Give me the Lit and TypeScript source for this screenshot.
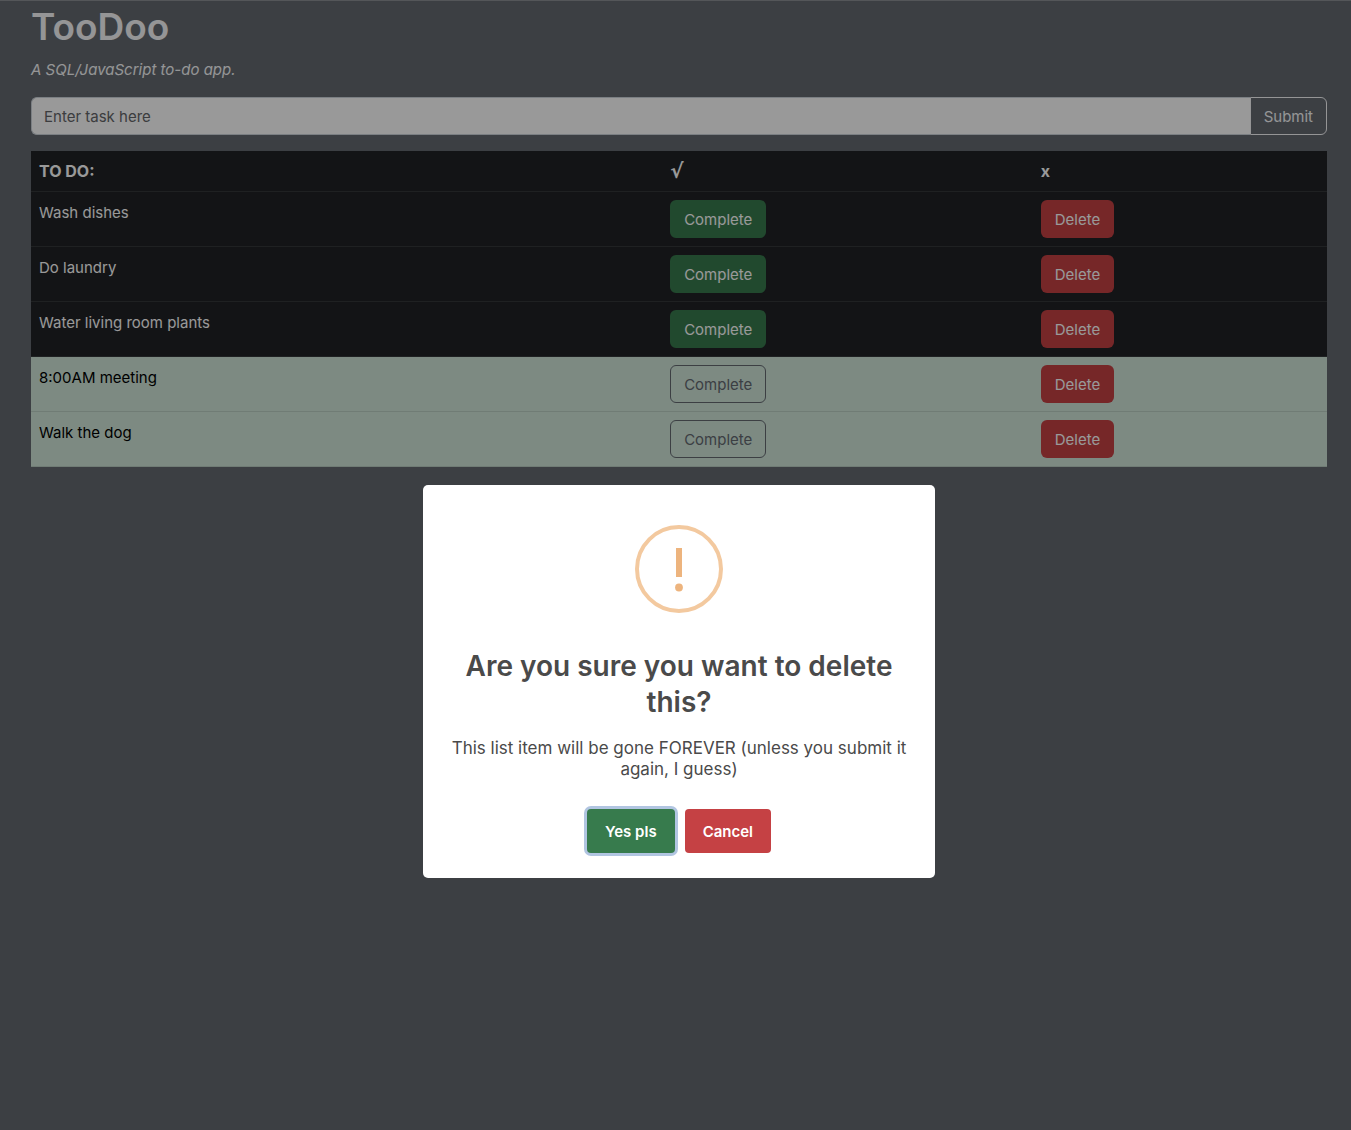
import { LitElement, html, css } from "lit";
import { customElement, state } from "lit/decorators.js";
import { classMap } from "lit/directives/class-map.js";

interface Task {
  name: string;
  done: boolean;
}

@customElement("app-root")
export class AppRoot extends LitElement {
  static styles = css`
    :host {
      display: block;
      min-height: 100vh;
      box-sizing: border-box;
      padding: 0 24px 24px 31px;
      border-top: 1px solid #8c9094;
      background: #646971;
      color: #f8f9fa;
      font: 400 15px/26px Inter, "Liberation Sans", sans-serif;
    }
    * {
      box-sizing: border-box;
    }
    h1 {
      margin: 0 0 4px;
      font-size: 37px;
      line-height: 52px;
      font-weight: 600;
    }
    .lead {
      margin: 0 0 14px;
      font-style: italic;
    }
    .entry {
      display: flex;
      margin-bottom: 16px;
    }
    .entry input {
      flex: 1;
      min-width: 0;
      height: 38px;
      padding: 6px 12px;
      border: 1px solid #ced4da;
      border-right: 0;
      border-radius: 6px 0 0 6px;
      background: #fff;
      color: #212529;
      font: inherit;
    }
    .entry input::placeholder {
      color: #646669;
      opacity: 1;
    }
    .btn {
      height: 38px;
      padding: 6px 13px 4px;
      border: 1px solid transparent;
      border-radius: 6px;
      color: #fff;
      font: inherit;
      white-space: nowrap;
      display: block;
    }
    .submit {
      border-color: #f8f9fa;
      border-radius: 0 6px 6px 0;
      background: none;
      color: #f8f9fa;
    }
    .success {
      background: #377b4d;
    }
    .danger {
      background: #c54144;
    }
    .outline {
      border-color: #646971;
      background: none;
      color: #646971;
    }
    table {
      width: 100%;
      border-collapse: separate;
      border-spacing: 0;
      table-layout: fixed;
    }
    .name {
      width: 48.7%;
    }
    .mark {
      width: 28.6%;
    }
    th,
    td {
      padding: 8px;
      border-bottom: 1px solid #34373a;
      background: #202225;
      color: #fff;
      text-align: left;
      vertical-align: top;
    }
    th {
      font-size: 16px;
      line-height: 24px;
      font-weight: 700;
    }
    .root {
      display: block;
      font: 700 20px/24px "DejaVu Sans", sans-serif;
    }
    .done td {
      border-bottom-color: #bbcfc3;
      background: #d0e6d9;
      color: #000;
    }
    .backdrop {
      position: fixed;
      inset: 0;
      display: flex;
      align-items: center;
      justify-content: center;
      padding: 233px 0 0 7px;
      background: rgba(0, 0, 0, 0.4);
    }
    .modal {
      display: flex;
      flex-direction: column;
      align-items: center;
      width: 512px;
      max-width: 100%;
      padding: 40px 26px 25px;
      border-radius: 5px;
      background: #fff;
      color: #4a4a4a;
      text-align: center;
    }
    .icon {
      width: 88px;
      height: 88px;
      margin-bottom: 35px;
    }
    h2 {
      margin: 0 0 18px;
      font-size: 28px;
      line-height: 36px;
      font-weight: 600;
    }
    .text {
      margin: 0 0 29px;
      font-size: 17px;
      line-height: 21px;
    }
    .actions {
      display: flex;
      gap: 10px;
    }
    .choice {
      height: 44px;
      padding: 2px 18px 0;
      border: 0;
      border-radius: 4px;
      color: #fff;
      font: inherit;
      font-weight: 600;
    }
    .focused {
      box-shadow: 0 0 0 3px #b1c5e1;
    }
    .choice:focus {
      outline: none;
    }
  `;

  @state() private tasks: Task[] = [
    { name: "Wash dishes", done: false },
    { name: "Do laundry", done: false },
    { name: "Water living room plants", done: false },
    { name: "8:00AM meeting", done: true },
    { name: "Walk the dog", done: true },
  ];

  private row(task: Task) {
    return html`
      <tr class=${classMap({ done: task.done })}>
        <td>${task.name}</td>
        <td>
          <button
            type="button"
            class=${classMap({ btn: true, success: !task.done, outline: task.done })}
          >
            Complete
          </button>
        </td>
        <td><button type="button" class="btn danger">Delete</button></td>
      </tr>
    `;
  }

  render() {
    return html`
      <main>
        <h1>TooDoo</h1>
        <p class="lead">A SQL/JavaScript to-do app.</p>
        <form class="entry" @submit=${(e: Event) => e.preventDefault()}>
          <input type="text" placeholder="Enter task here" aria-label="Enter task here" />
          <button class="btn submit">Submit</button>
        </form>
        <table>
          <thead>
            <tr>
              <th class="name" scope="col">TO DO:</th>
              <th class="mark" scope="col"><span class="root">√</span></th>
              <th scope="col">x</th>
            </tr>
          </thead>
          <tbody>
            ${this.tasks.map((t) => this.row(t))}
          </tbody>
        </table>
      </main>
      <div class="backdrop">
        <div class="modal" role="dialog" aria-modal="true" aria-labelledby="title" aria-describedby="text">
          <svg class="icon" viewBox="0 0 88 88" aria-hidden="true">
            <circle cx="44" cy="44" r="42" fill="none" stroke="#f3c99f" stroke-width="4" />
            <rect x="41" y="23" width="6" height="29" fill="#edb47e" />
            <circle cx="44" cy="62.5" r="3.9" fill="#edb47e" />
          </svg>
          <h2 id="title">Are you sure you want to delete this?</h2>
          <p class="text" id="text">
            This list item will be gone FOREVER (unless you submit it again, I guess)
          </p>
          <div class="actions">
            <button type="button" class="choice success focused">Yes pls</button>
            <button type="button" class="choice danger">Cancel</button>
          </div>
        </div>
      </div>
    `;
  }
}
